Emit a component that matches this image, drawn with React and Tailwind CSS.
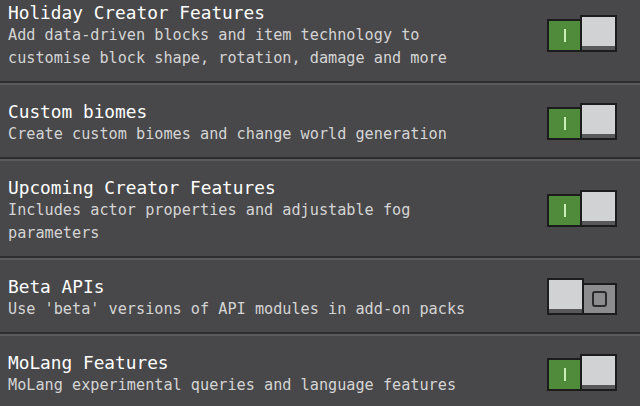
import React from 'react'

const features = [
    {
        title: 'Holiday Creator Features',
        desc: ['Add data-driven blocks and item technology to', 'customise block shape, rotation, damage and more'],
        on: true,
    },
    {
        title: 'Custom biomes',
        desc: ['Create custom biomes and change world generation'],
        on: true,
    },
    {
        title: 'Upcoming Creator Features',
        desc: ['Includes actor properties and adjustable fog', 'parameters'],
        on: true,
    },
    {
        title: 'Beta APIs',
        desc: ["Use 'beta' versions of API modules in add-on packs"],
        on: false,
    },
    {
        title: 'MoLang Features',
        desc: ['MoLang experimental queries and language features'],
        on: true,
    },
]

function Knob() {
    return (
        <div className="w-[37px] h-[37px] border-2 border-[#1c1c1d] bg-[#58585a] flex flex-col">
            <div className="flex-1 bg-[#d1d2d4]" />
            <div className="h-[4px]" />
        </div>
    )
}

function Toggle({ on }) {
    if (on) {
        return (
            <div className="flex items-end">
                <div className="w-[35px] h-[33px] border-2 border-[#1c1c1d] bg-[#4f8b3a] flex items-center justify-center">
                    <div className="w-[2px] h-[13px] bg-[#c8efb4]" />
                </div>
                <div className="-ml-[2px]">
                    <Knob />
                </div>
            </div>
        )
    }
    return (
        <div className="flex items-end">
            <Knob />
            <div className="-ml-[2px] w-[35px] h-[32px] border-2 border-[#1c1c1d] bg-[#8c8c8e] flex items-center justify-center">
                <div className="w-[15px] h-[16px] border-2 border-[#2b2b2c] rounded-[3px]" />
            </div>
        </div>
    )
}

function Row({ item, first }) {
    return (
        <div className={`flex items-center justify-between pl-2 pr-[23px] pt-[15px] pb-[11px] ${first ? '-mt-[14px]' : ''}`}>
            <div className="leading-[23px]">
                <div className="text-[17.8px] text-white">{item.title}</div>
                {item.desc.map((line, i) => (
                    <div key={i} className="text-[15.2px] text-[#d4d4d4]">{line}</div>
                ))}
            </div>
            <div className="-mt-[4px]">
                <Toggle on={item.on} />
            </div>
        </div>
    )
}

export default function App() {
    return (
        <div className="w-[640px] h-[406px] overflow-hidden bg-[#48484a]" style={{ fontFamily: '"DejaVu Sans Mono", "Liberation Mono", monospace' }}>
            {features.map((item, index) => (
                <div key={index}>
                    {index > 0 &&
                        <>
                            <div className="h-[2px] bg-[#2d2d2f]" />
                            <div className="h-[2px] bg-[#5b5b5d]" />
                        </>
                    }
                    <Row item={item} first={index === 0} />
                </div>
            ))}
        </div>
    )
}
